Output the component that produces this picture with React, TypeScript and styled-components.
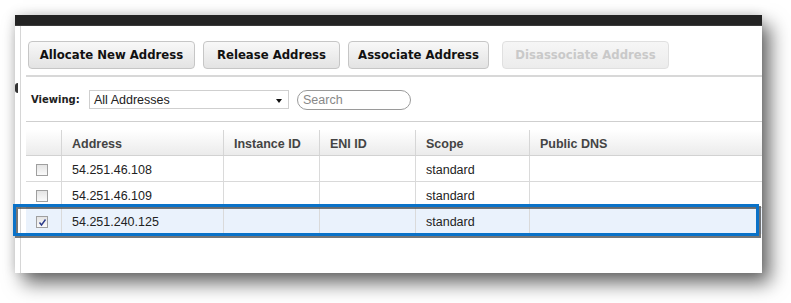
import React from "react";
import styled, { createGlobalStyle } from "styled-components";

const Global = createGlobalStyle`
  html, body { margin: 0; padding: 0; background: #ffffff; }
  body { font-family: "Liberation Sans", Arial, sans-serif; }
`;

const Page = styled.div`
  width: 791px;
  height: 303px;
  padding: 15px 0 0 15px;
  box-sizing: border-box;
  overflow: hidden;
`;

const Panel = styled.div`
  position: relative;
  width: 747px;
  height: 258px;
  background: #ffffff;
  box-shadow: 8px 10px 18px rgba(0, 0, 0, 0.6), -1px -1px 10px rgba(0, 0, 0, 0.12);
  display: flex;
  flex-direction: column;
`;

const TopBar = styled.div`
  height: 10px;
  background: #232323;
  border-bottom: 1px solid #3a3a3a;
  flex: none;
`;

const Body = styled.div`
  flex: 1;
  display: flex;
`;

const Sidebar = styled.div`
  position: relative;
  width: 5px;
  border-right: 1px solid #d6d6d6;
  flex: none;
`;

const Toggle = styled.div`
  position: absolute;
  left: 0;
  top: 57px;
  width: 3px;
  height: 10px;
  background: #333;
  border-radius: 5px 0 0 5px;
`;

const Main = styled.div`
  flex: 1;
  padding-left: 5px;
  display: flex;
  flex-direction: column;
`;

const Toolbar = styled.div`
  display: flex;
  align-items: flex-start;
  gap: 8px;
  padding: 15px 0 0 2px;
  height: 51px;
  box-sizing: border-box;
  border-bottom: 2px solid #d8d8d8;
`;

const Button = styled.button<{ $disabled?: boolean; $w: number }>`
  width: ${(p) => p.$w}px;
  height: 28px;
  box-sizing: border-box;
  border: 1px solid ${(p) => (p.$disabled ? "#e0e0e0" : "#c6c6c6")};
  border-radius: 4px;
  background: ${(p) =>
    p.$disabled
      ? "linear-gradient(#f6f6f6, #ececec)"
      : "linear-gradient(#f8f8f8, #e3e3e3)"};
  color: ${(p) => (p.$disabled ? "#c9c9c9" : "#111")};
  font-family: "DejaVu Sans", Verdana, sans-serif;
  font-weight: bold;
  font-size: 11.7px;
  padding: 0;
  margin-left: ${(p) => (p.$disabled ? "5px" : "0")};
  cursor: default;
`;

const FilterRow = styled.div`
  display: flex;
  align-items: center;
  height: 45px;
  box-sizing: border-box;
  border-bottom: 1px solid #cfcfcf;
  padding: 1px 0 0 5px;
`;

const Label = styled.span`
  font-family: "DejaVu Sans", Verdana, sans-serif;
  font-weight: bold;
  font-size: 10px;
  color: #222;
  width: 58px;
`;

const Select = styled.div`
  width: 200px;
  height: 19px;
  box-sizing: border-box;
  border: 1px solid #cfcfcf;
  display: flex;
  align-items: center;
  justify-content: space-between;
  padding: 0 6px 0 4px;
  font-size: 12.5px;
  color: #222;
  background: #fff;
`;

const Caret = styled.span`
  width: 0;
  height: 0;
  border-left: 3.5px solid transparent;
  border-right: 3.5px solid transparent;
  border-top: 4px solid #111;
  margin-top: 2px;
`;

const Search = styled.div`
  margin-left: 8px;
  width: 114px;
  height: 20px;
  box-sizing: border-box;
  border: 1px solid #9a9a9a;
  border-radius: 10px;
  font-size: 12.5px;
  color: #888;
  display: flex;
  align-items: center;
  padding-left: 5px;
`;

const Table = styled.div`
  margin-top: 8px;
  display: flex;
  flex-direction: column;
`;

const cols = "35px 162px 96px 96px 114px 1fr";

const HeadRow = styled.div`
  display: grid;
  grid-template-columns: ${cols};
  height: 25px;
  background: linear-gradient(#ffffff, #ebebeb);
  border-bottom: 1px solid #d2d2d2;
`;

const HeadCell = styled.div<{ $first?: boolean }>`
  display: flex;
  align-items: center;
  padding-left: 10px;
  padding-top: 3px;
  border-left: ${(p) => (p.$first ? "none" : "1px solid #d6d6d6")};
  font-weight: bold;
  font-size: 12.5px;
  color: #444;
`;

const Row = styled.div<{ $selected?: boolean }>`
  display: grid;
  grid-template-columns: ${cols};
  height: 25px;
  background: ${(p) => (p.$selected ? "#eaf2fc" : "#fff")};
  border-bottom: 1px solid ${(p) => (p.$selected ? "#eaf2fc" : "#d9d9d9")};
`;

const Cell = styled.div<{ $first?: boolean }>`
  display: flex;
  align-items: center;
  padding-left: 10px;
  padding-top: 3px;
  border-left: ${(p) => (p.$first ? "none" : "1px solid #dadada")};
  font-size: 12.5px;
  color: #222;
`;

const Check = styled.span`
  width: 12px;
  height: 12px;
  box-sizing: border-box;
  border: 1px solid #9f9f9f;
  background: linear-gradient(#e4e4e4, #fafafa);
  display: flex;
  align-items: center;
  justify-content: center;
`;

const Highlight = styled.div`
  position: absolute;
  left: -2px;
  top: 189px;
  width: 746px;
  height: 32px;
  box-sizing: border-box;
  border: 3px solid #0a72c8;
  filter: drop-shadow(2px 2px 0.5px rgba(60, 60, 60, 0.7));
  pointer-events: none;
`;

const rows = [
  { addr: "54.251.46.108", checked: false },
  { addr: "54.251.46.109", checked: false },
  { addr: "54.251.240.125", checked: true },
];

export default function App() {
  return (
    <>
      <Global />
      <Page>
        <Panel>
          <TopBar />
          <Body>
            <Sidebar>
              <Toggle />
            </Sidebar>
            <Main>
              <Toolbar>
                <Button $w={167}>Allocate New Address</Button>
                <Button $w={137}>Release Address</Button>
                <Button $w={141}>Associate Address</Button>
                <Button $w={167} $disabled>Disassociate Address</Button>
              </Toolbar>
              <FilterRow>
                <Label>Viewing:</Label>
                <Select>
                  <span>All Addresses</span>
                  <Caret />
                </Select>
                <Search>Search</Search>
              </FilterRow>
              <Table>
                <HeadRow>
                  <HeadCell $first />
                  <HeadCell>Address</HeadCell>
                  <HeadCell>Instance ID</HeadCell>
                  <HeadCell>ENI ID</HeadCell>
                  <HeadCell>Scope</HeadCell>
                  <HeadCell>Public DNS</HeadCell>
                </HeadRow>
                {rows.map((r) => (
                  <Row key={r.addr} $selected={r.checked}>
                    <Cell $first>
                      <Check>
                        {r.checked && (
                          <svg width="9" height="9" viewBox="0 0 9 9">
                            <path d="M1.5 4.5 L3.5 7 L7.5 1.5" fill="none" stroke="#2a3a8a" strokeWidth="1.4" />
                          </svg>
                        )}
                      </Check>
                    </Cell>
                    <Cell>{r.addr}</Cell>
                    <Cell />
                    <Cell />
                    <Cell>standard</Cell>
                    <Cell />
                  </Row>
                ))}
              </Table>
            </Main>
          </Body>
          <Highlight />
        </Panel>
      </Page>
    </>
  );
}
